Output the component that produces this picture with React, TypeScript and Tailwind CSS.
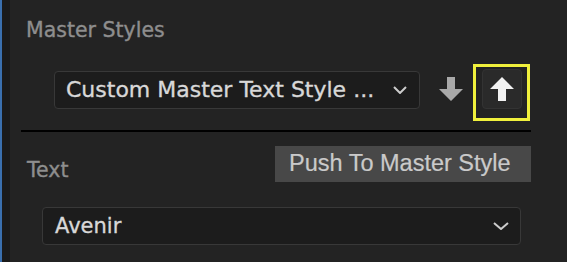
import React from "react";

const Chevron = ({ w = 14 }: { w?: number }) => (
  <svg width={w} height={8} viewBox={`0 0 ${w} 8`} fill="none">
    <path d={`M1 1 L${w / 2} 7 L${w - 1} 1`} stroke="#cccccc" strokeWidth={2} />
  </svg>
);

export default function App() {
  return (
    <div className="w-[567px] h-[262px] overflow-hidden flex bg-[#232323]" style={{ fontFamily: '"DejaVu Sans", sans-serif' }}>
      <div className="w-[2px] bg-[#3a6fae]" />
      <div className="w-[8px] bg-[#1a1a1a]" />
      <div className="relative flex-1 flex flex-col bg-[#232323]">
        <div className="pt-[18px] pl-[16px] text-[20.5px] leading-[24px] text-[#8e8e8e] [-webkit-text-stroke:0.35px_#8e8e8e]">Master Styles</div>
        <div className="mt-[27px] ml-[44px] flex items-end gap-[19px] h-[40px]">
          <div className="w-[366px] h-[38px] rounded-[4px] border border-[#383838] bg-[#1c1c1c] flex items-center justify-between pl-[11px] pr-[12px]">
            <span className="text-[22px] text-[#d8d8d8] whitespace-nowrap leading-none [-webkit-text-stroke:0.35px_#d8d8d8]">Custom Master Text Style ...</span>
            <Chevron w={14} />
          </div>
          <svg width={24} height={24} viewBox="0 0 24 24" className="self-center">
            <path d="M8 0 H16 V12 H24 L12 24 L0 12 H8 Z" fill="#a9a9a9" />
          </svg>
          <div className="relative">
            <div className="w-[40px] h-[40px] rounded-[4px] border border-[#333333] bg-[#2a2a2a] flex items-center justify-center">
              <svg width={24} height={24} viewBox="0 0 24 24">
                <path d="M12 0 L24 12 H16 V24 H8 V12 H0 Z" fill="#f2f2f2" />
              </svg>
            </div>
            <div className="absolute left-[-9px] top-[-5px] w-[57px] h-[57px] border-[3px] border-[#f0f03c]" />
          </div>
        </div>
        <div className="mt-[21px] ml-[11px] w-[510px] h-[2px] bg-black" />
        <div className="mt-[26px] pl-[17px] text-[20.5px] leading-[24px] text-[#8e8e8e] [-webkit-text-stroke:0.35px_#8e8e8e]">Text</div>
        <div className="mt-[25px] ml-[32px] w-[479px] h-[38px] rounded-[4px] border border-[#383838] bg-[#1c1c1c] flex items-center justify-between pl-[12px] pr-[11px]">
          <span className="text-[21px] text-[#d8d8d8] leading-none [-webkit-text-stroke:0.35px_#d8d8d8]">Avenir</span>
          <Chevron w={16} />
        </div>
        <div
          className="absolute left-[265px] top-[146px] w-[256px] h-[36px] bg-[#484848] flex items-center pl-[14px] text-[23.5px] text-[#cacaca] whitespace-nowrap [-webkit-text-stroke:0.2px_#cacaca]"
          style={{ fontFamily: '"Liberation Sans", Arial, sans-serif' }}
        >
          Push To Master Style
        </div>
      </div>
    </div>
  );
}
